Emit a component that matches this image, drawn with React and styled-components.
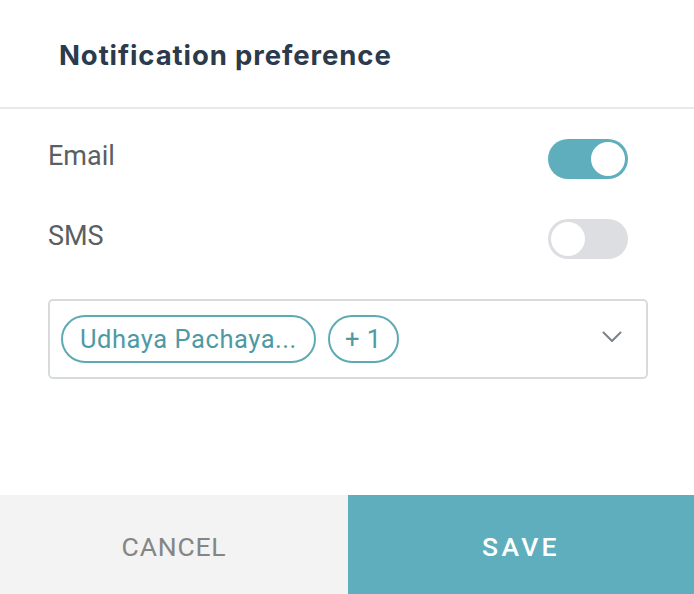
import React, { useState } from "react";
import styled, { createGlobalStyle } from "styled-components";

const Global = createGlobalStyle`
  html, body { margin: 0; padding: 0; background: #fff; }
  * { box-sizing: border-box; }
`;

const Page = styled.div`
  width: 694px;
  height: 594px;
  display: flex;
  flex-direction: column;
  font-family: Roboto, "Liberation Sans", sans-serif;
  background: #fff;
  overflow: hidden;
`;

const Header = styled.div`
  height: 109px;
  display: flex;
  align-items: center;
  padding-left: 59px;
  padding-top: 2px;
  border-bottom: 2px solid #e8e9e9;
`;

const Title = styled.h1`
  margin: 0;
  font-family: Inter, "Noto Sans", sans-serif;
  font-weight: 700;
  font-size: 27.5px;
  letter-spacing: 0.9px;
  color: #2c3a4b;
`;

const Body = styled.div`
  flex: 1;
  padding: 10px 46px 0 48px;
  display: flex;
  flex-direction: column;
`;

const Row = styled.div`
  height: 80px;
  display: flex;
  align-items: center;
  justify-content: space-between;
  padding-right: 20px;
`;

const Label = styled.span`
  font-size: 27px;
  color: #5b5f63;
  margin-top: -6px;
`;

const Track = styled.button`
  width: 80px;
  height: 40px;
  border-radius: 20px;
  border: none;
  padding: 3px;
  cursor: pointer;
  display: flex;
  justify-content: ${(p) => (p.$on ? "flex-end" : "flex-start")};
  background: ${(p) => (p.$on ? "#5eaebd" : "#dcdee1")};
`;

const Knob = styled.span`
  width: 34px;
  height: 34px;
  border-radius: 50%;
  background: #fff;
`;

const Select = styled.div`
  margin-top: 20px;
  height: 80px;
  border: 2px solid #d8dbdd;
  border-radius: 5px;
  display: flex;
  align-items: center;
  padding: 0 24px 0 11px;
  gap: 12px;
`;

const Chip = styled.span`
  height: 48px;
  border: 2px solid #5eaab3;
  border-radius: 24px;
  display: inline-flex;
  align-items: center;
  padding: 0 ${(p) => p.$pad}px;
  font-size: 25.5px;
  color: #4e9aa4;
  letter-spacing: 0.55px;
  white-space: nowrap;
`;

const Chevron = styled.svg`
  margin-left: auto;
  margin-top: -4px;
`;

const Footer = styled.div`
  height: 99px;
  display: grid;
  grid-template-columns: 348px 1fr;
`;

const FooterButton = styled.button`
  border: none;
  margin: 0;
  padding: 4px 0 0;
  font-family: Roboto, "Liberation Sans", sans-serif;
  font-size: 26.5px;
  letter-spacing: ${(p) => (p.$primary ? "3.3px" : "0.8px")};
  font-weight: ${(p) => (p.$primary ? 500 : 400)};
  background: ${(p) => (p.$primary ? "#5eaebd" : "#f2f3f2")};
  color: ${(p) => (p.$primary ? "#ffffff" : "#858585")};
  cursor: pointer;
`;

function Toggle({ on, onClick }) {
  return (
    <Track $on={on} onClick={onClick} aria-pressed={on}>
      <Knob />
    </Track>
  );
}

export default function App() {
  const [email, setEmail] = useState(true);
  const [sms, setSms] = useState(false);
  return (
    <>
      <Global />
      <Page>
        <Header>
          <Title>Notification preference</Title>
        </Header>
        <Body>
          <Row>
            <Label>Email</Label>
            <Toggle on={email} onClick={() => setEmail(!email)} />
          </Row>
          <Row>
            <Label>SMS</Label>
            <Toggle on={sms} onClick={() => setSms(!sms)} />
          </Row>
          <Select>
            <Chip $pad={17}>Udhaya Pachaya...</Chip>
            <Chip $pad={15}>+ 1</Chip>
            <Chevron width="20" height="12" viewBox="0 0 20 12" fill="none">
              <path d="M1.5 1.5 L10 10 L18.5 1.5" stroke="#7b8189" strokeWidth="2" strokeLinecap="round" strokeLinejoin="round" />
            </Chevron>
          </Select>
        </Body>
        <Footer>
          <FooterButton>CANCEL</FooterButton>
          <FooterButton $primary>SAVE</FooterButton>
        </Footer>
      </Page>
    </>
  );
}
